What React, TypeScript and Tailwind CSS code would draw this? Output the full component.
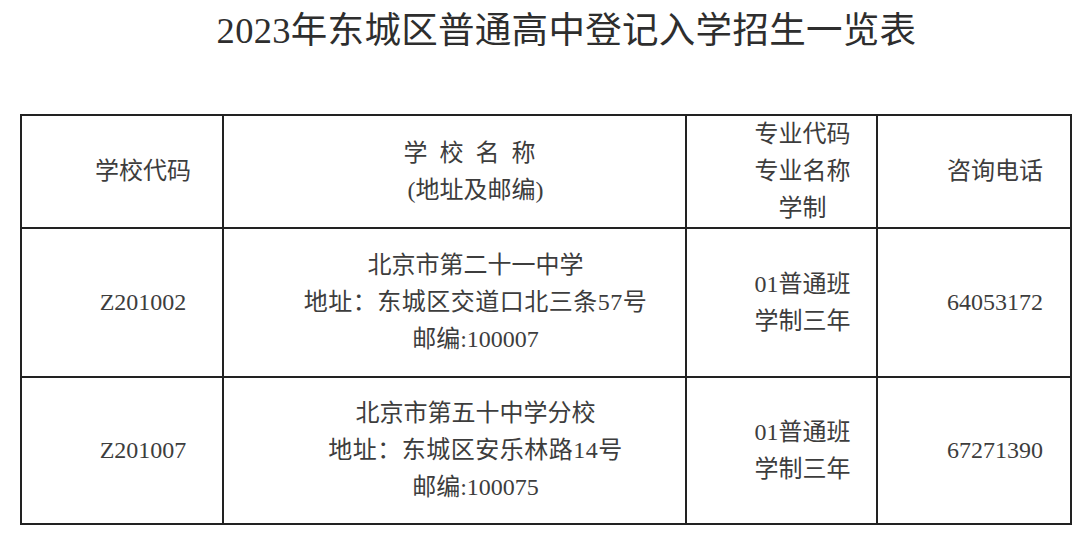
import React from "react";

const font = { fontFamily: '"Liberation Serif", "Noto Sans CJK SC", serif' };

const rows = [
  {
    code: "Z201002",
    name: "北京市第二十一中学",
    addr: "地址：东城区交道口北三条57号",
    zip: "邮编:100007",
    phone: "64053172",
  },
  {
    code: "Z201007",
    name: "北京市第五十中学分校",
    addr: "地址：东城区安乐林路14号",
    zip: "邮编:100075",
    phone: "67271390",
  },
];

const cell = "border-2 border-[#222] p-0 pl-[42px] text-center align-middle";

export default function App() {
  return (
    <div className="w-[1080px] h-[537px] bg-white text-[#3d3d3d]" style={font}>
      <h1 className="h-[67px] pt-[8px] pl-[53px] text-center text-[36.5px] leading-[46px] tracking-[0.3px] text-[#2e2e2e]">
        2023年东城区普通高中登记入学招生一览表
      </h1>
      <div className="pt-[47px] pl-[20px]">
        <table className="table-fixed border-collapse w-[1050px] text-[24px] leading-[37px]">
          <colgroup>
            <col className="w-[202px]" />
            <col className="w-[463px]" />
            <col className="w-[191px]" />
            <col className="w-[194px]" />
          </colgroup>
          <tbody>
            <tr className="h-[112px]">
              <td className={cell}>学校代码</td>
              <td className={cell}>
                <div className="tracking-[12px]">学校名称</div>
                <div>(地址及邮编)</div>
              </td>
              <td className={cell}>
                <div>专业代码</div>
                <div>专业名称</div>
                <div>学制</div>
              </td>
              <td className={cell}>咨询电话</td>
            </tr>
            {rows.map((r, i) => (
              <tr key={r.code} className={i === 0 ? "h-[149px]" : "h-[147px]"}>
                <td className={cell}>{r.code}</td>
                <td className={cell}>
                  <div>{r.name}</div>
                  <div className="tracking-[0.5px]">{r.addr}</div>
                  <div>{r.zip}</div>
                </td>
                <td className={cell}>
                  <div>01普通班</div>
                  <div>学制三年</div>
                </td>
                <td className={cell}>{r.phone}</td>
              </tr>
            ))}
          </tbody>
        </table>
      </div>
    </div>
  );
}
